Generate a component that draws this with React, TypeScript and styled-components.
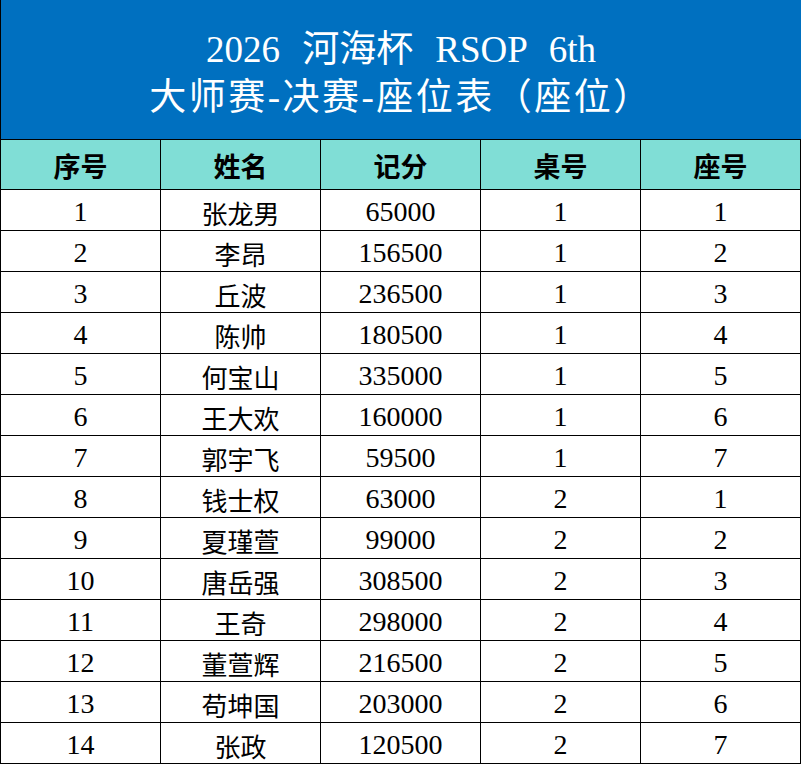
import React from 'react';
import styled, { createGlobalStyle } from 'styled-components';

const GlobalStyle = createGlobalStyle`
  html, body {
    margin: 0;
    padding: 0;
    background: #ffffff;
  }
`;

const Sheet = styled.div`
  width: 801px;
  font-family: 'Liberation Serif', 'Noto Sans CJK SC', serif;
  color: #000;
`;

const Title = styled.div`
  height: 140px;
  box-sizing: border-box;
  border-left: 1px solid #000;
  border-bottom: 1px solid #000;
  background: #0070c0;
  color: #ffffff;
  padding-top: 26px;
  text-align: center;
  font-size: 37px;
  line-height: 48px;
`;

const TitleLine = styled.div<{ $spread?: boolean }>`
  white-space: pre;
  word-spacing: 0.35em;
  letter-spacing: ${(p) => (p.$spread ? '2.5px' : '0')};
`;

const Grid = styled.div`
  display: grid;
  grid-template-columns: repeat(5, 1fr);
  grid-template-rows: 49px;
  grid-auto-rows: 40px;
  gap: 1px;
  background: #000;
  padding: 0 1px 1px 1px;
`;

const HeadCell = styled.div`
  background: #80ded6;
  display: flex;
  align-items: center;
  justify-content: center;
  padding-top: 2px;
  font-size: 27px;
  font-weight: 600;
`;

const Cell = styled.div`
  background: #ffffff;
  display: flex;
  align-items: center;
  justify-content: center;
  padding-top: 4px;
  font-size: 26px;
`;

const Num = styled.span`
  font-size: 28px;
`;

const columns = ['序号', '姓名', '记分', '桌号', '座号'];

const rows: [number, string, number, number, number][] = [
  [1, '张龙男', 65000, 1, 1],
  [2, '李昂', 156500, 1, 2],
  [3, '丘波', 236500, 1, 3],
  [4, '陈帅', 180500, 1, 4],
  [5, '何宝山', 335000, 1, 5],
  [6, '王大欢', 160000, 1, 6],
  [7, '郭宇飞', 59500, 1, 7],
  [8, '钱士权', 63000, 2, 1],
  [9, '夏瑾萱', 99000, 2, 2],
  [10, '唐岳强', 308500, 2, 3],
  [11, '王奇', 298000, 2, 4],
  [12, '董萱辉', 216500, 2, 5],
  [13, '苟坤国', 203000, 2, 6],
  [14, '张政', 120500, 2, 7],
];

export default function App() {
  return (
    <Sheet>
      <GlobalStyle />
      <Title>
        <TitleLine>2026 河海杯 RSOP 6th</TitleLine>
        <TitleLine $spread>大师赛-决赛-座位表（座位）</TitleLine>
      </Title>
      <Grid>
        {columns.map((c) => (
          <HeadCell key={c}>{c}</HeadCell>
        ))}
        {rows.map((r) =>
          r.map((v, i) => (
            <Cell key={`${r[0]}-${i}`}>
              {typeof v === 'number' ? <Num>{v}</Num> : v}
            </Cell>
          ))
        )}
      </Grid>
    </Sheet>
  );
}
